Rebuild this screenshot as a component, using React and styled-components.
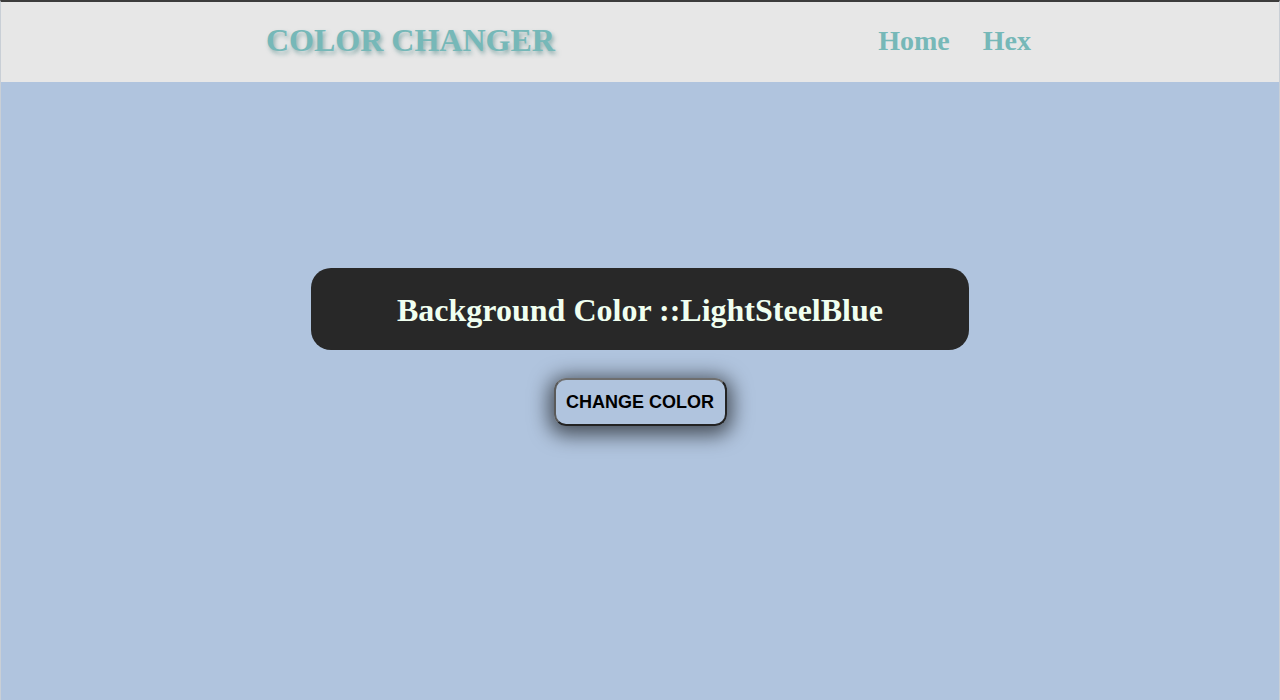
import React, { useState } from "react";
import styled, { createGlobalStyle } from "styled-components";

const Global = createGlobalStyle`
  html, body { margin: 0; padding: 0; }
  body { font-family: "Liberation Serif", "Times New Roman", serif; }
`;

const Page = styled.div`
  width: 1280px;
  height: 700px;
  box-sizing: border-box;
  background: ${(p) => p.$bg};
  border-top: 2px solid #3c3c3c;
  border-left: 1px solid #c9cfd6;
  border-right: 1px solid #c9cfd6;
  display: flex;
  flex-direction: column;
  overflow: hidden;
`;

const Header = styled.header`
  height: 80px;
  background: #e7e7e7;
  display: flex;
  align-items: center;
  justify-content: space-between;
  padding: 0 248px 0 265px;
  box-sizing: border-box;
`;

const Logo = styled.h1`
  margin: 0;
  font-family: "Liberation Serif", "Times New Roman", serif;
  font-weight: bold;
  font-size: 32px;
  color: #76b8b8;
  text-shadow: 2px 3px 4px rgba(70, 130, 130, 0.55);
  position: relative;
  top: -2px;
`;

const Nav = styled.nav`
  display: flex;
  gap: 33px;
  align-items: center;
  position: relative;
  top: -1px;
`;

const NavLink = styled.a`
  font-family: "Liberation Serif", "Times New Roman", serif;
  font-weight: bold;
  font-size: 28px;
  color: #76b8b8;
  text-decoration: none;
  cursor: pointer;
`;

const Main = styled.main`
  flex: 1;
  display: flex;
  flex-direction: column;
  align-items: center;
  padding-top: 186px;
  gap: 28px;
`;

const Card = styled.div`
  width: 658px;
  height: 82px;
  box-sizing: border-box;
  padding-top: 3px;
  background: #282828;
  border-radius: 20px;
  display: flex;
  align-items: center;
  justify-content: center;
`;

const CardTitle = styled.h2`
  margin: 0;
  font-family: "Liberation Serif", "Times New Roman", serif;
  font-weight: bold;
  font-size: 32px;
  color: #f0fff0;
`;

const Button = styled.button`
  width: 173px;
  height: 48px;
  box-sizing: border-box;
  background: transparent;
  border: 2px solid;
  border-color: #6e6e6e #232323 #232323 #5a5a5a;
  border-radius: 12px;
  font-family: "Liberation Sans", Arial, sans-serif;
  font-weight: bold;
  font-size: 18px;
  color: #000;
  box-shadow: 0 4px 20px 5px rgba(0, 0, 0, 0.6);
  cursor: pointer;
  padding: 0;
`;

const colors = [
  ["LightSteelBlue", "#b0c4de"],
  ["LightBlue", "#add8e6"],
  ["Thistle", "#d8bfd8"],
  ["PaleGreen", "#98fb98"],
];

export default function App() {
  const [i, setI] = useState(0);
  const [name, hex] = colors[i];
  return (
    <>
      <Global />
      <Page $bg={hex}>
        <Header>
          <Logo>COLOR CHANGER</Logo>
          <Nav>
            <NavLink>Home</NavLink>
            <NavLink>Hex</NavLink>
          </Nav>
        </Header>
        <Main>
          <Card>
            <CardTitle>Background Color ::{name}</CardTitle>
          </Card>
          <Button onClick={() => setI((i + 1) % colors.length)}>CHANGE COLOR</Button>
        </Main>
      </Page>
    </>
  );
}
